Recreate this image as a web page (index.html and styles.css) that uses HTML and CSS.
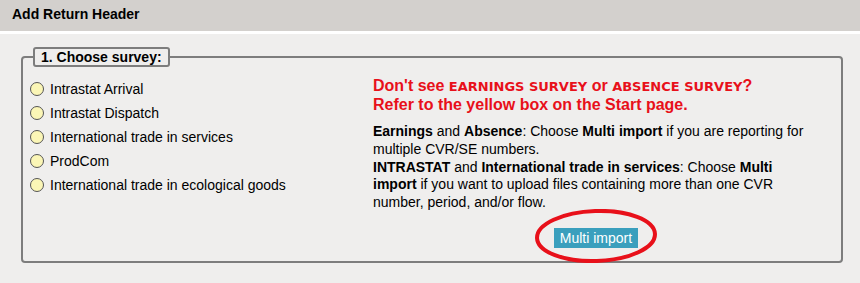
FILE: index.html
```html
<!DOCTYPE html>
<html lang="en">
<head>
  <meta charset="UTF-8">
  <title>Add Return Header</title>
  <link rel="stylesheet" href="styles.css">
</head>
<body>
  <div class="page-header">Add Return Header</div>

  <div class="content">
    <fieldset class="survey-box">
      <legend>1. Choose survey:</legend>
      <div class="survey-grid">
        <div class="survey-list">
          <label class="survey-option"><span class="radio"></span>Intrastat Arrival</label>
          <label class="survey-option"><span class="radio"></span>Intrastat Dispatch</label>
          <label class="survey-option"><span class="radio"></span>International trade in services</label>
          <label class="survey-option"><span class="radio"></span>ProdCom</label>
          <label class="survey-option"><span class="radio"></span>International trade in ecological goods</label>
        </div>

        <div class="survey-info">
          <div class="notice">
            Don't see <span class="caps">EARNINGS SURVEY</span> or <span class="caps">ABSENCE SURVEY</span>?<br>
            Refer to the yellow box on the Start page.
          </div>
          <p class="help">
            <b>Earnings</b> and <b>Absence</b>: Choose <b>Multi import</b> if you are reporting for multiple CVR/SE numbers.<br>
            <b>INTRASTAT</b> and <b>International trade in services</b>: Choose <b>Multi import</b> if you want to upload files containing more than one CVR number, period, and/or flow.
          </p>
          <div class="multi-wrap">
            <button class="multi-btn">Multi import</button>
            <svg class="circle-mark" width="126" height="58" viewBox="0 0 126 58">
              <ellipse cx="63" cy="27" rx="59" ry="25" fill="none" stroke="#e8101a" stroke-width="4" transform="rotate(-2 63 27)"/>
            </svg>
          </div>
        </div>
      </div>
    </fieldset>
  </div>
</body>
</html>
```

FILE: styles.css
```css
body {
  margin: 0;
  padding: 0;
  background: #efeeed;
  font-family: "Liberation Sans", Arial, sans-serif;
  font-size: 14px;
  color: #000;
}

.page-header {
  height: 31px;
  line-height: 29px;
  padding-left: 12px;
  background: #d3d0cd;
  border-bottom: 3px solid #fff;
  font-weight: bold;
  font-size: 14px;
}

.content {
  padding: 13px 17px 0 21px;
}

.survey-box {
  margin: 0;
  padding: 0 8px 0 7px;
  height: 212px;
  border: 2px solid #7d7d7d;
  border-radius: 4px;
}

.survey-box legend {
  margin-left: 3px;
  padding: 0 6px;
  height: 16px;
  line-height: 16px;
  border: 2px solid #7d7d7d;
  border-radius: 3px;
  background: #efeeed;
  font-weight: bold;
  font-size: 14px;
}

.survey-grid {
  display: grid;
  grid-template-columns: 343px 440px;
}

.survey-list {
  display: flex;
  flex-direction: column;
  gap: 6px;
  padding-top: 13px;
}

.survey-option {
  display: flex;
  align-items: center;
  height: 18px;
  gap: 6px;
}

.radio {
  width: 12px;
  height: 12px;
  border: 1px solid #555;
  border-radius: 50%;
  background: #fbf6b6;
}

.survey-info {
  padding-top: 10px;
}

.notice {
  color: #e8101a;
  font-weight: bold;
  font-size: 16px;
  line-height: 18px;
}

.notice .caps {
  font-family: "DejaVu Sans", Verdana, sans-serif;
  font-size: 13px;
}

.help {
  margin: 9px 0 0;
  line-height: 17.8px;
}

.multi-wrap {
  position: relative;
  width: 126px;
  height: 58px;
  margin: -3px 0 0 160px;
  display: flex;
  align-items: center;
  justify-content: center;
}

.multi-btn {
  background: #3a9fbd;
  color: #fff;
  border: none;
  border-radius: 0;
  font-family: "Liberation Sans", Arial, sans-serif;
  font-size: 14px;
  height: 20px;
  padding: 0 6px;
}

.circle-mark {
  position: absolute;
  left: 0;
  top: 0;
}
```
